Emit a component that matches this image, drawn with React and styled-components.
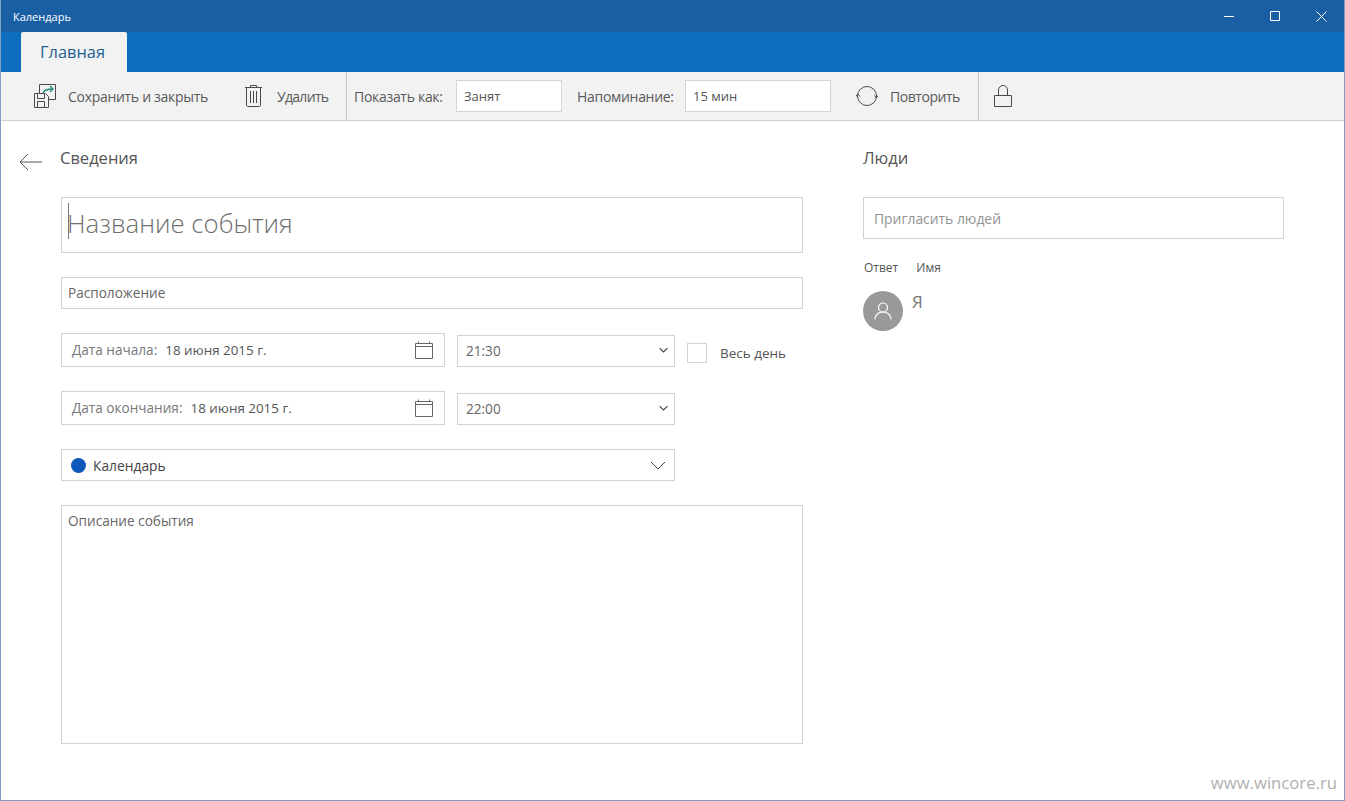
import React from 'react';
import styled, { createGlobalStyle } from 'styled-components';

const GlobalStyle = createGlobalStyle`
    html, body {
        margin: 0;
        padding: 0;
        background: #fff;
    }
    * {
        box-sizing: border-box;
    }
`;

const Window = styled.div`
    position: relative;
    width: 1345px;
    height: 801px;
    overflow: hidden;
    display: flex;
    flex-direction: column;
    background: #fff;
    border: 1px solid #7f9fc4;
    border-top: 0;
    font-family: 'Open Sans', 'Noto Sans', sans-serif;
    color: #555;
`;

const TitleBar = styled.div`
    height: 32px;
    flex: none;
    display: flex;
    align-items: center;
    justify-content: space-between;
    padding-left: 12px;
    background: #1a5fa4;
    color: #fff;
    font-size: 11px;
`;

const WindowButtons = styled.div`
    display: flex;
    align-items: center;
    color: #fff;
`;

const WindowButton = styled.div`
    width: 46px;
    height: 32px;
    display: flex;
    align-items: center;
    justify-content: center;
`;

const Ribbon = styled.div`
    height: 40px;
    flex: none;
    padding-left: 20px;
    background: #0e6dbf;
`;

const Tab = styled.div`
    width: 106px;
    height: 40px;
    display: flex;
    align-items: center;
    padding: 0 0 2px 19px;
    background: #f2f2f2;
    border-radius: 2px 2px 0 0;
    color: #1d5f94;
    font-size: 16.4px;
`;

const Toolbar = styled.div`
    height: 49px;
    flex: none;
    display: flex;
    background: #f2f2f2;
    border-bottom: 1px solid #cfcfcf;
`;

const ToolGroup = styled.div`
    width: ${p => p.$width}px;
    padding-left: ${p => p.$pad}px;
    display: flex;
    align-items: center;
    border-right: ${p => (p.$last ? '0' : '1px solid #c8c8c8')};
`;

const ToolButton = styled.div`
    width: ${p => p.$width}px;
    display: flex;
    align-items: center;
    gap: ${p => p.$gap || 12}px;
    font-size: 14px;
    letter-spacing: ${p => p.$spacing || -0.3}px;
    white-space: nowrap;
    color: #5a5a5a;
`;

const ToolLabel = styled.div`
    width: ${p => p.$width}px;
    font-size: 14px;
    letter-spacing: -0.3px;
    white-space: nowrap;
    color: #5a5a5a;
`;

const ToolInput = styled.div`
    width: ${p => p.$width}px;
    height: 32px;
    margin-right: ${p => p.$after}px;
    padding-left: 7px;
    display: flex;
    align-items: center;
    background: #fff;
    border: 1px solid #d4d4d4;
    font-size: 13px;
    color: #555;
`;

const Body = styled.div`
    flex: 1;
    display: grid;
    grid-template-columns: 862px 421px;
`;

const Column = styled.div`
    padding-top: 26px;
`;

const DetailsHeader = styled.div`
    height: 22px;
    display: flex;
    padding-left: 18px;
    gap: 18px;
`;

const Heading = styled.h2`
    margin: 0;
    font-size: 16.5px;
    font-weight: 400;
    line-height: 22px;
    color: #555;
`;

const BackIcon = styled.svg`
    margin-top: 6px;
    flex: none;
`;

const Form = styled.div`
    margin: 28px 0 0 60px;
    width: 742px;
    display: flex;
    flex-direction: column;
    gap: 24px;
`;

const Field = styled.div`
    position: relative;
    display: flex;
    align-items: center;
    justify-content: space-between;
    flex: none;
    width: ${p => (p.$width ? `${p.$width}px` : '100%')};
    height: ${p => p.$height}px;
    padding: 0 ${p => p.$padRight || 6}px ${p => p.$padBottom || 0}px ${p => p.$padLeft || 6}px;
    background: #fff;
    border: 1px solid #d2d2d2;
    font-size: 13.6px;
    color: #666;
    white-space: nowrap;
`;

const TitleField = styled(Field)`
    padding-bottom: 4px;
    padding-left: 5px;
    font-size: 25.8px;
    font-weight: 300;
    color: #6f6f6f;

    &::before {
        content: '';
        position: absolute;
        left: 6px;
        top: 5px;
        width: 1px;
        height: 36px;
        background: #777;
    }
`;

const DescriptionField = styled(Field)`
    align-items: flex-start;
    padding-top: 5px;
`;

const InviteField = styled(Field)`
    color: #929292;
    font-size: 13.9px;
`;

const DateRow = styled.div`
    display: flex;
    align-items: flex-end;
`;

const DateValue = styled.span`
    margin-top: -2px;
`;

const DateText = styled.span`
    white-space: pre;
    font-size: ${p => (p.$value ? '13.4px' : '13.6px')};
    margin-left: ${p => (p.$value ? '1px' : '0')};
    color: ${p => (p.$value ? '#555' : '#777')};
`;

const TimeField = styled(Field)`
    margin-left: 12px;
`;

const CheckBox = styled.div`
    width: 20px;
    height: 20px;
    margin: 0 13px 4px 12px;
    flex: none;
    background: #fff;
    border: 1px solid #d4d4d4;
`;

const CheckLabel = styled.div`
    font-size: 13.5px;
    line-height: 20px;
    margin-bottom: 4px;
    white-space: nowrap;
    color: #555;
`;

const CalendarName = styled.div`
    display: flex;
    align-items: center;
    gap: 7px;
    font-size: 13.8px;
    color: #444;
`;

const Dot = styled.span`
    width: 15px;
    height: 15px;
    border-radius: 50%;
    background: #0f58bb;
`;

const InviteWrap = styled.div`
    margin-top: 28px;
`;

const AttendeeHeader = styled.div`
    margin: 20px 0 0 1px;
    display: flex;
    gap: 18px;
    font-size: 12px;
    line-height: 17px;
    color: #555;
`;

const Attendee = styled.div`
    margin-top: 15px;
    display: flex;
    gap: 9px;
    font-size: 17px;
    line-height: 22px;
    color: #777;
`;

const Avatar = styled.div`
    width: 40px;
    height: 40px;
    border-radius: 50%;
    display: flex;
    align-items: center;
    justify-content: center;
    background: #999;
`;

const Watermark = styled.div`
    position: absolute;
    right: 7px;
    bottom: 7px;
    font-size: 16.7px;
    line-height: 20px;
    color: #b0b0b0;
`;

const SaveIcon = () => (
    <svg width="24" height="24" viewBox="0 0 24 24" fill="none" stroke="#4a4a4a" strokeWidth="1">
        <path d="M6.5 9V0.5H22.5V15.5H15.5" />
        <path d="M10 9C11 6 14 5 20 5" stroke="#1f8a7a" strokeWidth="1.3" />
        <path d="M17 2L20 5L17 8" stroke="#1f8a7a" strokeWidth="1.3" />
        <path d="M1.5 9.5H12.5L15.5 12.5V23.5H1.5Z" fill="#f2f2f2" />
        <path d="M4.5 9.5V14.5H11.5V9.5M4.5 23.5V17.5H11.5V23.5" />
    </svg>
);

const TrashIcon = () => (
    <svg width="17" height="22" viewBox="0 0 17 22" fill="none" stroke="#4a4a4a" strokeWidth="1">
        <path d="M0 2.5H17M5.5 2.5V0.5H11.5V2.5" />
        <path d="M1.5 2.5V20C1.5 20.8 2.2 21.5 3 21.5H14C14.8 21.5 15.5 20.8 15.5 20V2.5" />
        <path d="M5.5 6V18M8.5 6V18M11.5 6V18" />
    </svg>
);

const RepeatIcon = () => (
    <svg width="22" height="22" viewBox="0 0 22 22" fill="none" stroke="#4a4a4a" strokeWidth="1">
        <circle cx="11" cy="11" r="9.5" />
        <path d="M0 11.5L1.7 9L4 11.5M18.5 10.5L20.3 13L22 10.5" />
    </svg>
);

const LockIcon = () => (
    <svg width="18" height="22" viewBox="0 0 18 22" fill="none" stroke="#4a4a4a" strokeWidth="1">
        <path d="M0.5 10.5H17.5V21.5H0.5Z" />
        <path d="M4.5 10.5V5A4.5 4.5 0 0 1 13.5 5V10.5" />
    </svg>
);

const CalendarIcon = () => (
    <svg width="18" height="18" viewBox="0 0 18 18" fill="none" stroke="#666" strokeWidth="1">
        <path d="M0.5 2.5H17.5V17.5H0.5Z" />
        <path d="M0.5 5.5H17.5M3.5 0.5V2.5M14.5 0.5V2.5" />
    </svg>
);

const Chevron = ({ width, height }) => (
    <svg width={width} height={height} viewBox="0 0 16 9" fill="none" stroke="#444" strokeWidth={width > 12 ? 1 : 2}>
        <path d="M1 1L8 8L15 1" />
    </svg>
);

const App = () => {
    return (
        <Window>
            <GlobalStyle />
            <TitleBar>
                Календарь
                <WindowButtons>
                    <WindowButton>
                        <svg width="10" height="10" viewBox="0 0 10 10" stroke="#fff" fill="none">
                            <path d="M0 5.5H10" />
                        </svg>
                    </WindowButton>
                    <WindowButton>
                        <svg width="10" height="10" viewBox="0 0 10 10" stroke="#fff" fill="none">
                            <path d="M0.5 0.5H9.5V9.5H0.5Z" />
                        </svg>
                    </WindowButton>
                    <WindowButton>
                        <svg width="11" height="11" viewBox="0 0 11 11" stroke="#fff" fill="none">
                            <path d="M0.5 0.5L10.5 10.5M10.5 0.5L0.5 10.5" />
                        </svg>
                    </WindowButton>
                </WindowButtons>
            </TitleBar>

            <Ribbon>
                <Tab>Главная</Tab>
            </Ribbon>

            <Toolbar>
                <ToolGroup $width={346} $pad={32}>
                    <ToolButton $width={212} $gap={11}>
                        <SaveIcon />
                        Сохранить и закрыть
                    </ToolButton>
                    <ToolButton $gap={15} $spacing={-0.7}>
                        <TrashIcon />
                        Удалить
                    </ToolButton>
                </ToolGroup>
                <ToolGroup $width={632} $pad={7}>
                    <ToolLabel $width={102}>Показать как:</ToolLabel>
                    <ToolInput $width={106} $after={15}>Занят</ToolInput>
                    <ToolLabel $width={108}>Напоминание:</ToolLabel>
                    <ToolInput $width={146} $after={25}>15 мин</ToolInput>
                    <ToolButton $spacing={-0.45}>
                        <RepeatIcon />
                        Повторить
                    </ToolButton>
                </ToolGroup>
                <ToolGroup $width={60} $pad={15} $last>
                    <LockIcon />
                </ToolGroup>
            </Toolbar>

            <Body>
                <Column>
                    <DetailsHeader>
                        <BackIcon width="23" height="18" viewBox="0 0 23 18" fill="none" stroke="#555" strokeWidth="1">
                            <path d="M23 9H1M9 1L1 9L9 17" />
                        </BackIcon>
                        <Heading>Сведения</Heading>
                    </DetailsHeader>
                    <Form>
                        <TitleField $height={56}>Название события</TitleField>
                        <Field $height={32} $padBottom={2}>Расположение</Field>
                        <DateRow>
                            <Field $width={384} $height={34} $padLeft={10} $padRight={11}>
                                <DateValue>
                                    <DateText>Дата начала:  </DateText>
                                    <DateText $value>18 июня 2015 г.</DateText>
                                </DateValue>
                                <CalendarIcon />
                            </Field>
                            <TimeField $width={218} $height={32} $padLeft={8} $padBottom={2}>
                                21:30
                                <Chevron width={9} height={6} />
                            </TimeField>
                            <CheckBox />
                            <CheckLabel>Весь день</CheckLabel>
                        </DateRow>
                        <DateRow>
                            <Field $width={384} $height={34} $padLeft={10} $padRight={11}>
                                <DateValue>
                                    <DateText>Дата окончания:  </DateText>
                                    <DateText $value>18 июня 2015 г.</DateText>
                                </DateValue>
                                <CalendarIcon />
                            </Field>
                            <TimeField $width={218} $height={32} $padLeft={8} $padBottom={2}>
                                22:00
                                <Chevron width={9} height={6} />
                            </TimeField>
                        </DateRow>
                        <Field $width={614} $height={32} $padLeft={9} $padRight={8}>
                            <CalendarName>
                                <Dot />
                                Календарь
                            </CalendarName>
                            <Chevron width={16} height={9} />
                        </Field>
                        <DescriptionField $height={239}>Описание события</DescriptionField>
                    </Form>
                </Column>

                <Column>
                    <Heading>Люди</Heading>
                    <InviteWrap>
                        <InviteField $height={42} $padLeft={10}>Пригласить людей</InviteField>
                    </InviteWrap>
                    <AttendeeHeader>
                        <span>Ответ</span>
                        <span>Имя</span>
                    </AttendeeHeader>
                    <Attendee>
                        <Avatar>
                            <svg width="18" height="18" viewBox="0 0 18 18" fill="none" stroke="#fff" strokeWidth="1.2">
                                <circle cx="9" cy="5.5" r="4.5" />
                                <path d="M1 17.5C1 13 4.5 10 9 10C13.5 10 17 13 17 17.5" />
                            </svg>
                        </Avatar>
                        Я
                    </Attendee>
                </Column>
            </Body>

            <Watermark>www.wincore.ru</Watermark>
        </Window>
    );
};

export default App;
